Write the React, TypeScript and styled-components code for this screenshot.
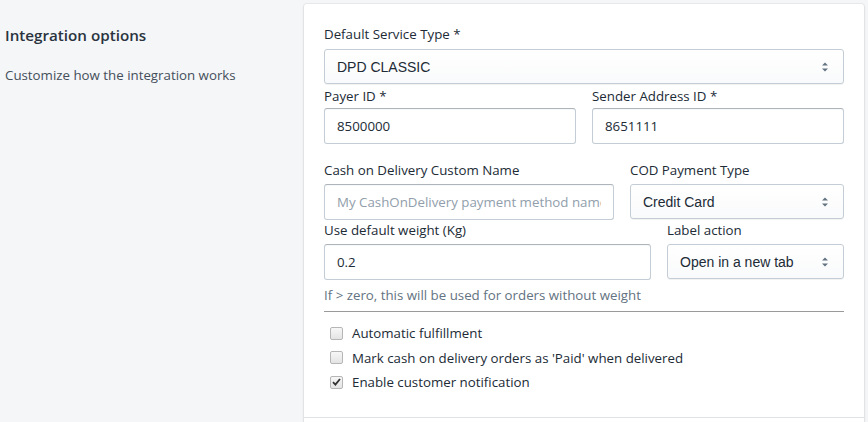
import React from 'react';
import styled, { createGlobalStyle } from 'styled-components';

const uiFont = `'Open Sans', 'Noto Sans', sans-serif`;
const selectFont = `'Liberation Sans', Arial, sans-serif`;

const GlobalStyle = createGlobalStyle`
  body {
    margin: 0;
    background-color: #f4f6f8;
    color: #212b36;
    font-family: ${uiFont};
    font-size: 13.3px;
  }
`;

const Layout = styled.div`
  display: flex;
  align-items: flex-start;
  padding: 4px 4px 0 5px;
  height: 418px;
  overflow: hidden;
`;

const Annotation = styled.div`
  width: 299px;
  flex-shrink: 0;
  padding-top: 19px;
`;

const Heading = styled.h2`
  margin: 0;
  font-size: 15.2px;
  font-weight: 600;
  line-height: 24px;
  color: #2a333d;
`;

const Description = styled.p`
  margin: 18px 0 0;
  font-size: 13.3px;
  line-height: 20px;
  color: #454f5b;
`;

const Card = styled.div`
  flex: 1;
  background: #fff;
  border-radius: 3px;
  box-shadow: 0 0 0 1px rgba(63, 63, 68, 0.05), 0 1px 3px 0 rgba(63, 63, 68, 0.15);
`;

const CardSection = styled.div`
  padding: 20px 20px 22px;
`;

const CardFooter = styled.div`
  border-top: 1px solid #dfe3e8;
  height: 20px;
`;

const Row = styled.div<{ $cols: string; $after: number; $labelGap?: number }>`
  display: grid;
  grid-template-columns: ${(p) => p.$cols};
  column-gap: 16px;
  margin-bottom: ${(p) => p.$after}px;
  label {
    margin-bottom: ${(p) => p.$labelGap ?? 4}px;
  }
`;

const Field = styled.div`
  display: flex;
  flex-direction: column;
  min-width: 0;
`;

const Label = styled.label`
  font-size: 13.3px;
  line-height: 20px;
  color: #212b36;
`;

const Input = styled.input`
  box-sizing: border-box;
  height: 36px;
  width: 100%;
  padding: 0 12px;
  font-family: ${uiFont};
  font-size: 13.3px;
  color: #212b36;
  background: #fff;
  border: 1px solid #c4cdd5;
  border-top-color: #aeb4b9;
  border-radius: 3px;
  box-shadow: inset 0 1px 0 0 rgba(99, 115, 129, 0.05);
  outline: none;
  &::placeholder {
    color: #919eab;
  }
`;

const SelectBox = styled.div`
  position: relative;
  box-sizing: border-box;
  height: 35px;
  display: flex;
  align-items: center;
  padding: 0 12px;
  font-family: ${selectFont};
  font-size: 14px;
  color: #212b36;
  background: linear-gradient(180deg, #fff, #f9fafb);
  border: 1px solid #c4cdd5;
  border-radius: 3px;
  box-shadow: 0 1px 0 0 rgba(22, 29, 37, 0.05);
`;

const Arrows = styled.svg`
  position: absolute;
  right: 14px;
  top: 50%;
  width: 8px;
  height: 10px;
  margin-top: -5px;
`;

const Help = styled.div`
  margin-top: 5px;
  font-size: 13.3px;
  line-height: 20px;
  color: #637381;
  white-space: nowrap;
`;

const Divider = styled.hr`
  margin: 6px 0 9px;
  border: 0;
  border-top: 1px solid #9a9a9a;
`;

const CheckList = styled.div`
  display: flex;
  flex-direction: column;
  padding-left: 6px;
`;

const CheckRow = styled.label`
  display: flex;
  align-items: center;
  height: 24.5px;
  font-size: 13.3px;
  color: #212b36;
`;

const Box = styled.span`
  box-sizing: border-box;
  width: 13px;
  height: 13px;
  margin-right: 9px;
  border: 1px solid #b6b6b6;
  border-radius: 2px;
  background: linear-gradient(180deg, #f7f7f7, #e4e4e4);
  display: flex;
  align-items: center;
  justify-content: center;
`;

function Select({ value }: { value: string }) {
  return (
    <SelectBox>
      {value}
      <Arrows viewBox="0 0 8 10">
        <path d="M4 0.5 L7 3.5 H1 Z M4 9.5 L7 6.5 H1 Z" fill="#637381" />
      </Arrows>
    </SelectBox>
  );
}

function Check({ on, children }: { on?: boolean; children: React.ReactNode }) {
  return (
    <CheckRow>
      <Box>
        {on && (
          <svg width="9" height="8" viewBox="0 0 9 8">
            <path d="M1 4.2 L3.4 6.6 L8 1" fill="none" stroke="#333" strokeWidth="1.8" />
          </svg>
        )}
      </Box>
      {children}
    </CheckRow>
  );
}

const App: React.FunctionComponent = () => (
  <>
    <GlobalStyle />
    <Layout>
      <Annotation>
        <Heading>Integration options</Heading>
        <Description>Customize how the integration works</Description>
      </Annotation>
      <Card>
        <CardSection>
          <Row $cols="1fr" $after={2} $labelGap={5}>
            <Field>
              <Label>Default Service Type *</Label>
              <Select value="DPD CLASSIC" />
            </Field>
          </Row>
          <Row $cols="1fr 1fr" $after={16} $labelGap={2}>
            <Field>
              <Label>Payer ID *</Label>
              <Input defaultValue="8500000" />
            </Field>
            <Field>
              <Label>Sender Address ID *</Label>
              <Input defaultValue="8651111" />
            </Field>
          </Row>
          <Row $cols="290px 1fr" $after={0}>
            <Field>
              <Label>Cash on Delivery Custom Name</Label>
              <Input placeholder="My CashOnDelivery payment method name" />
            </Field>
            <Field>
              <Label>COD Payment Type</Label>
              <Select value="Credit Card" />
            </Field>
          </Row>
          <Row $cols="327px 1fr" $after={0}>
            <Field>
              <Label>Use default weight (Kg)</Label>
              <Input defaultValue="0.2" />
              <Help>If &gt; zero, this will be used for orders without weight</Help>
            </Field>
            <Field>
              <Label>Label action</Label>
              <Select value="Open in a new tab" />
            </Field>
          </Row>
          <Divider />
          <CheckList>
            <Check>Automatic fulfillment</Check>
            <Check>Mark cash on delivery orders as 'Paid' when delivered</Check>
            <Check on>Enable customer notification</Check>
          </CheckList>
        </CardSection>
        <CardFooter />
      </Card>
    </Layout>
  </>
);

export default App;
